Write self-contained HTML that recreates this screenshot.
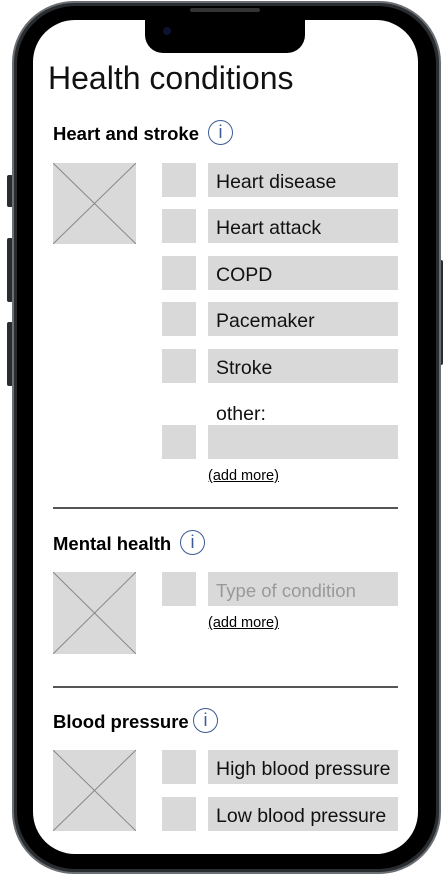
<!DOCTYPE html>
<html><head><style>
*{margin:0;padding:0;box-sizing:border-box}
body{width:444px;height:875px;background:#fff;position:relative;overflow:hidden;font-family:"Liberation Sans",Arial,sans-serif}
.abs{position:absolute}
.frame{left:12px;top:1px;width:429px;height:873px;border-radius:62px;background:#2a2d30;border:2px solid #6b6f73}
.bezel{left:17px;top:6px;width:419px;height:863px;border-radius:58px;background:#000}
.screen{left:33px;top:20px;width:385px;height:834px;border-radius:42px;background:#fff;overflow:hidden}
.notch{left:145px;top:18px;width:160px;height:35px;background:#000;border-radius:0 0 18px 18px}
.btn{background:#2a2d30;width:6px;border-radius:2px}
.g{background:#d9d9d9}
.cb{width:34px;height:34px}
.lab{left:208px;width:190px;height:34px;font-size:19.5px;line-height:38px;padding-left:8px;color:#111}
h2{font-size:18.5px;font-weight:bold;color:#000;position:absolute;left:53px}
.info{width:25px;height:25px;border:1.5px solid #3b5b94;border-radius:50%;color:#3b5b94;font-size:18px;text-align:center;line-height:22px;position:absolute}
.add{font-size:14.5px;left:208px;text-decoration:underline;color:#000}
.hr{left:53px;width:345px;height:1.5px;background:#555}
</style></head><body>
<div class="abs btn" style="left:7px;top:175px;height:32px"></div>
<div class="abs btn" style="left:7px;top:238px;height:64px"></div>
<div class="abs btn" style="left:7px;top:322px;height:64px"></div>
<div class="abs btn" style="left:437px;top:260px;height:105px"></div>
<div class="abs frame"></div>
<div class="abs bezel"></div>
<div class="abs screen"></div>
<div class="abs notch"></div>
<div class="abs" style="left:190px;top:8px;width:70px;height:4px;background:#333;border-radius:2px"></div>
<div class="abs" style="left:163px;top:27px;width:8px;height:8px;border-radius:50%;background:#0d1230"></div>

<div class="abs" style="left:48px;top:60px;font-size:32px;color:#111">Health conditions</div>

<h2 style="top:123px">Heart and stroke</h2>
<div class="info" style="left:208px;top:120px">i</div>
<svg class="abs" style="left:53px;top:163px" width="83" height="81"><rect width="83" height="81" fill="#d9d9d9"/><path d="M0 0L83 81M83 0L0 81" stroke="#888" stroke-width="1"/></svg>
<div class="abs g cb" style="left:162px;top:163px"></div><div class="abs g lab" style="top:163px">Heart disease</div>
<div class="abs g cb" style="left:162px;top:209px"></div><div class="abs g lab" style="top:209px">Heart attack</div>
<div class="abs g cb" style="left:162px;top:256px"></div><div class="abs g lab" style="top:256px">COPD</div>
<div class="abs g cb" style="left:162px;top:302px"></div><div class="abs g lab" style="top:302px">Pacemaker</div>
<div class="abs g cb" style="left:162px;top:349px"></div><div class="abs g lab" style="top:349px">Stroke</div>
<div class="abs lab" style="top:395px">other:</div>
<div class="abs g cb" style="left:162px;top:425px"></div><div class="abs g lab" style="top:425px"></div>
<div class="abs add" style="top:468px">(add more)</div>
<div class="abs hr" style="top:507px"></div>

<h2 style="top:533px">Mental health</h2>
<div class="info" style="left:180px;top:530px">i</div>
<svg class="abs" style="left:53px;top:572px" width="83" height="82"><rect width="83" height="82" fill="#d9d9d9"/><path d="M0 0L83 82M83 0L0 82" stroke="#888" stroke-width="1"/></svg>
<div class="abs g cb" style="left:162px;top:572px"></div><div class="abs g lab" style="top:572px;color:#999;font-size:18.5px">Type of condition</div>
<div class="abs add" style="top:615px">(add more)</div>
<div class="abs hr" style="top:686px"></div>

<h2 style="top:711px">Blood pressure</h2>
<div class="info" style="left:193px;top:708px">i</div>
<svg class="abs" style="left:53px;top:750px" width="83" height="81"><rect width="83" height="81" fill="#d9d9d9"/><path d="M0 0L83 81M83 0L0 81" stroke="#888" stroke-width="1"/></svg>
<div class="abs g cb" style="left:162px;top:750px"></div><div class="abs g lab" style="top:750px">High blood pressure</div>
<div class="abs g cb" style="left:162px;top:797px"></div><div class="abs g lab" style="top:797px">Low blood pressure</div>
</body></html>
